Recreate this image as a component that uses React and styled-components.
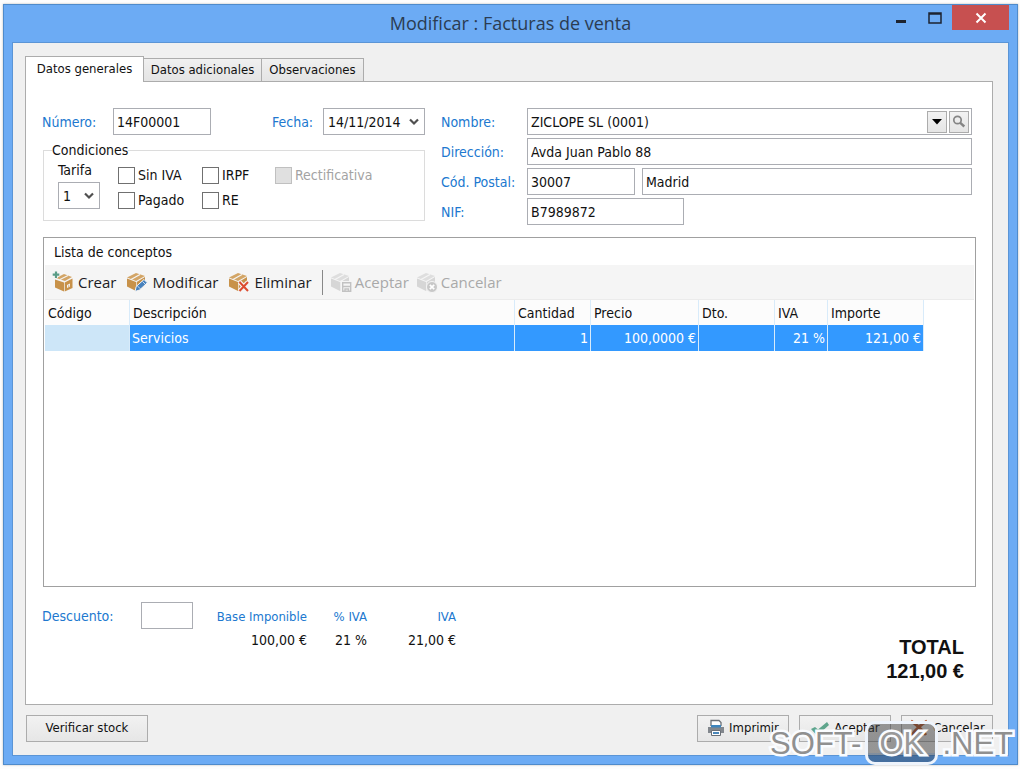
import React from "react";
import styled, { createGlobalStyle, css } from "styled-components";

const ui = '"DejaVu Sans Condensed", "DejaVu Sans", Tahoma, sans-serif';
const segoe = '"Open Sans", "Noto Sans", sans-serif';

const GlobalStyle = createGlobalStyle`
  * { box-sizing: border-box; }
  body { margin: 0; background: #fdfdfd; font: 14px/16px ${ui}; color: #111; }
  button, input, select { font: inherit; color: inherit; margin: 0; border-radius: 0; }
`;

const Page = styled.div`
  min-height: 100vh;
  padding: 4px 2px 4px 3px;
  display: flex;
`;

const Window = styled.main`
  flex: 1;
  min-width: 0;
  position: relative;
  display: flex;
  flex-direction: column;
  padding: 0 8px 8px;
  background: #6cabf4;
  border: 1px solid #4f8bcb;
  box-shadow: 0 0 2px #bbb;
`;

const TitleBar = styled.header`
  height: 37px;
  display: grid;
  grid-template-columns: 1fr auto 1fr;
  align-items: start;
`;

const Title = styled.h1`
  grid-column: 2;
  margin: 0;
  font: 18px/37px ${segoe};
  color: #2b3c52;
`;

const WindowControls = styled.div`
  display: flex;
  justify-content: flex-end;
`;

const ControlButton = styled.button`
  width: ${(p) => (p.$close ? 57 : 34)}px;
  height: 25px;
  padding: 0;
  border: 0;
  display: grid;
  place-items: center;
  background: ${(p) => (p.$close ? "#c75050" : "transparent")};
`;

const Client = styled.div`
  flex: 1;
  display: flex;
  flex-direction: column;
  padding: 13px 15px 13px 12px;
  background: #f0f0f0;
  border: 1px solid #5b95d6;
`;

const Tabs = styled.nav`
  display: flex;
  align-items: flex-end;
`;

const Tab = styled.button`
  height: 23px;
  width: ${(p) => p.$width}px;
  padding: 0;
  font-size: 13px;
  white-space: nowrap;
  border: 1px solid #acacac;
  border-width: 1px 1px 0 0;
  background: linear-gradient(#f0f0f0, #e4e4e4);
  ${(p) =>
    p.$active &&
    css`
      height: 26px;
      border-left-width: 1px;
      background: #fff;
      margin-bottom: -1px;
      padding-bottom: 2px;
      z-index: 1;
    `}
`;

const Panel = styled.section`
  flex: 1;
  display: flex;
  flex-direction: column;
  padding: 26px 16px 21px;
  background: #fff;
  border: 1px solid #acacac;
`;

const Fields = styled.div`
  display: grid;
  grid-template-columns: 383px 1fr;
  gap: 16px;
`;

const Label = styled.label`
  color: #2078cf;
  white-space: nowrap;
`;

const TextBox = styled.input`
  flex: ${(p) => (p.$width ? "none" : "1")};
  width: ${(p) => (p.$width ? p.$width + "px" : "100%")};
  min-width: 0;
  height: 27px;
  padding: 0 3px;
  background: #fff;
  border: 1px solid #abadb3;
`;

const Picker = styled.select`
  appearance: none;
  width: ${(p) => p.$width}px;
  height: 27px;
  padding: 0 4px;
  border: 1px solid #abadb3;
  background: #fff
    url("data:image/svg+xml,%3Csvg xmlns='http://www.w3.org/2000/svg' width='10' height='8'%3E%3Cpath d='M1 1.5l4 4 4-4' fill='none' stroke='%23505050' stroke-width='2.2'/%3E%3C/svg%3E")
    no-repeat right 5px center;
`;

const NumberRow = styled.div`
  display: grid;
  grid-template-columns: 71px 98px 1fr 51px 102px;
  align-items: center;
`;

const DateLabel = styled(Label)`
  grid-column: 4;
`;

const Conditions = styled.fieldset`
  display: flex;
  height: 79px;
  margin: 7px 0 0 1px;
  padding: 4px 14px 0;
  border: 1px solid #dcdcdc;
`;

const Legend = styled.legend`
  margin-left: -6px;
  padding: 0;
`;

const Rate = styled.div`
  display: flex;
  flex-direction: column;
  width: 60px;
  gap: 4px;
`;

const Checks = styled.div`
  display: grid;
  grid-template-columns: 84px 73px auto;
  grid-auto-rows: 16px;
  row-gap: 9px;
  padding-top: 5px;
`;

const Check = styled.label`
  display: flex;
  align-items: center;
  gap: 3px;
  white-space: nowrap;
  color: ${(p) => (p.$off ? "#a3a3a3" : "inherit")};
  input {
    appearance: none;
    width: 17px;
    height: 17px;
    border: 1px solid ${(p) => (p.$off ? "#c0c0c0" : "#707070")};
    background: ${(p) => (p.$off ? "#e0e0e0" : "#fff")};
  }
`;

const Customer = styled.div`
  display: grid;
  grid-template-columns: 86px 1fr;
  row-gap: 3px;
  align-items: center;
  padding-right: 4px;
`;

const Combo = styled.div`
  display: flex;
  align-items: center;
  gap: 2px;
  padding-right: 2px;
  border: 1px solid #abadb3;
  input { flex: 1; height: 25px; border: 0; }
`;

const ComboButton = styled.button`
  width: 20px;
  height: 22px;
  padding: 0;
  display: grid;
  place-items: center;
  border: 1px solid #acacac;
  background: linear-gradient(#f2f2f2, #e5e5e5);
`;

const Locality = styled.div`
  display: flex;
  gap: 7px;
`;

const List = styled.section`
  flex: 1;
  margin: 12px 0 0 1px;
  padding: 0 1px;
  border: 1px solid #a0a0a0;
`;

const ListTitle = styled.h2`
  margin: 0;
  padding: 6px 9px 5px;
  font: inherit;
`;

const Toolbar = styled.div`
  display: flex;
  align-items: center;
  height: 35px;
  padding-left: 7px;
  background: #f5f5f5;
  border-bottom: 1px solid #ebebeb;
`;

const Tool = styled.button`
  display: flex;
  align-items: center;
  gap: 4px;
  margin-right: 10px;
  padding: 0;
  border: 0;
  background: none;
  font: 15px/20px ${segoe};
  color: ${(p) => (p.disabled ? "#a9a9a9" : "#1c1c24")};
  &:disabled { gap: 3px; margin-right: 7px; }
`;

const Divider = styled.span`
  width: 1px;
  height: 25px;
  margin-right: 7px;
  background: #888;
`;

const Grid = styled.table`
  width: 879px;
  table-layout: fixed;
  border-collapse: separate;
  border-spacing: 0;
  th, td { height: 26px; padding: 0 3px; white-space: nowrap; border-right: 1px solid #d8ebfa; }
  th { height: 25px; font-weight: normal; text-align: left; background: #fcfcfc; }
  td { color: #fff; background: #3399ff; text-align: right; padding: 0 2px; }
  td:first-child { background: #cde6f8; }
  td:nth-child(2) { text-align: left; }
`;

const Summary = styled.div`
  display: flex;
  align-items: flex-start;
  padding-top: 15px;
`;

const Discount = styled.div`
  display: flex;
  align-items: center;
  height: 27px;
  label { width: 99px; }
`;

const Taxes = styled.table`
  margin-left: 22px;
  margin-top: 3px;
  border-spacing: 0;
  table-layout: fixed;
  width: 241px;
  th, td { height: 23px; padding: 0; text-align: right; font-weight: normal; white-space: nowrap; }
  th { color: #2078cf; font-size: 13px; }
`;

const Total = styled.p`
  margin: 33px 12px 0 auto;
  font: bold 20px/24px "Liberation Sans", Arial, sans-serif;
  text-align: right;
`;

const Footer = styled.footer`
  display: flex;
  gap: 10px;
  padding: 10px 0 0 1px;
`;

const Button = styled.button`
  width: ${(p) => p.$width || 92}px;
  height: 27px;
  display: flex;
  align-items: center;
  justify-content: center;
  gap: 4px;
  padding: 0 0 2px;
  font-size: 13px;
  white-space: nowrap;
  border: 1px solid #acacac;
  background: linear-gradient(#f2f2f2, #e6e6e6);
  &:first-child { margin-right: auto; }
`;

const Watermark = styled.div`
  position: absolute;
  right: 4px;
  bottom: -1px;
  display: flex;
  align-items: center;
  gap: 4px;
  font: 31px/43px "Liberation Sans", Arial, sans-serif;
  color: #909090;
  -webkit-text-stroke: 5px #fafcff;
  paint-order: stroke fill;
  pointer-events: none;
`;

const Badge = styled.span`
  width: 73px;
  height: 44px;
  line-height: 40px;
  text-align: center;
  color: #999;
  border: 3px solid #eef4fc;
  border-radius: 10px;
  background: linear-gradient(rgba(60, 60, 60, 0.5) 76%, rgba(38, 62, 90, 0.55) 76%);
`;

function BoxIcon({ kind, muted }) {
  const body = muted ? "#d6d6d6" : "#c8924a";
  const top = muted ? "#dedede" : "#d3a566";
  const gap = "#f5f5f5";
  return (
    <svg width="22" height="22" viewBox="0 0 22 22" aria-hidden="true">
      {kind === "add" ? (
        <>
          <path d="M4 7l8-4 8 3-7 4z" fill={top} />
          <path d="M3 8.500l9 3v9l-9-4z" fill={body} />
          <path d="M12.700 11.500l7.800-4v9.500l-7.800 3.500z" fill={body} />
          <path d="M8 8.500l8-4" stroke={gap} strokeWidth="1.200" />
          <path d="M15 14l3-1.400v3l-3 1.300z" fill={gap} />
          <path d="M16 14.700l1.200-.5v1l-1.200.5z" fill={body} />
          <path d="M4 0v7M.5 3.500h7" stroke={gap} strokeWidth="4" />
          <path d="M4 .5v6.500M.7 3.700h6.600" stroke="#5a9c86" strokeWidth="2.200" />
        </>
      ) : (
        <>
          <path d="M1 6.500l9-4.500 9 3-9 5z" fill={top} />
          <path d="M1 7.500l9 3.500v9L1 15.500z" fill={body} />
          <path d="M10.700 11l8.300-5v8.500l-8.300 5.500z" fill={body} />
          <path d="M5 8.500l9-5" stroke={gap} strokeWidth="1.300" />
        </>
      )}
      {kind === "edit" && (
        <>
          <path d="M9 20.500l1.200-5 7.800-7 3.300 3.300-7.800 7.200z" fill="#4781bd" stroke={gap} />
          <path d="M11.500 15l2.800 2.800M16.500 10.500l2.800 2.800" stroke="#e9f2fb" strokeWidth=".8" />
        </>
      )}
      {kind === "remove" && (
        <>
          <path d="M11.500 11l8.500 9M20 11l-8.500 9" stroke={gap} strokeWidth="4.500" />
          <path d="M11.500 11l8.500 9M20 11l-8.500 9" stroke="#dc4c30" strokeWidth="2" />
        </>
      )}
      {kind === "save" && (
        <>
          <path d="M11 10h11v12H11z" fill={gap} />
          <path d="M12.700 11.700h8v8.600h-8zM12.700 15.500h8M15 20v-2h3.500v2" fill="none" stroke="#c2c2c2" strokeWidth="1.400" />
        </>
      )}
      {kind === "cancel" && (
        <>
          <circle cx="16" cy="16" r="5.500" fill="#c8c8c8" stroke={gap} />
          <path d="M13.800 13.800l4.400 4.400M18.200 13.800l-4.400 4.400" stroke="#fff" strokeWidth="1.700" />
        </>
      )}
    </svg>
  );
}

const PrinterIcon = () => (
  <svg width="18" height="18" viewBox="0 0 18 18" aria-hidden="true">
    <path d="M4 7V1.500h8l2 2V7" fill="#fff" stroke="#6b7077" strokeWidth="1.300" />
    <path d="M1 8h16v6H1z" fill="#82878d" />
    <path d="M4 6h10v2.500H4z" fill="#3e85bd" />
    <path d="M4.500 11.500h9v5h-9z" fill="#fff" stroke="#6b7077" />
    <path d="M6 13h6v2H6z" fill="#4a87ba" />
  </svg>
);

const CheckIcon = () => (
  <svg width="20" height="18" viewBox="0 0 20 18" aria-hidden="true">
    <path d="M1 10l4-2 3 2.500L17 3l2 3L8.500 15.500H6z" fill="#5fa58c" />
  </svg>
);

const CrossIcon = () => (
  <svg width="20" height="18" viewBox="0 0 20 18" aria-hidden="true">
    <path d="M2 2q9 6 15 14M18 2Q8 8 3 16" fill="none" stroke="#b45328" strokeWidth="2.800" />
  </svg>
);

const columns = [
  ["Código", 85, ""],
  ["Descripción", 385, "Servicios"],
  ["Cantidad", 76, "1"],
  ["Precio", 108, "100,0000 €"],
  ["Dto.", 76, ""],
  ["IVA", 53, "21 %"],
  ["Importe", 96, "121,00 €"],
];

export default function App() {
  return (
    <Page>
      <GlobalStyle />
      <Window>
        <TitleBar>
          <Title>Modificar : Facturas de venta</Title>
          <WindowControls>
            <ControlButton aria-label="Minimizar">
              <svg width="12" height="14"><path d="M1 9h10v3H1z" fill="#1d2430" /></svg>
            </ControlButton>
            <ControlButton aria-label="Maximizar">
              <svg width="14" height="12"><path d="M1 1h12v10H1zM1 2h12" fill="none" stroke="#1d2430" strokeWidth="1.500" /></svg>
            </ControlButton>
            <ControlButton $close aria-label="Cerrar">
              <svg width="12" height="12"><path d="M1.500 1.500l9 9M10.500 1.500l-9 9" stroke="#fff" strokeWidth="2" /></svg>
            </ControlButton>
          </WindowControls>
        </TitleBar>

        <Client>
          <Tabs>
            <Tab $active $width={119}>Datos generales</Tab>
            <Tab $width={118}>Datos adicionales</Tab>
            <Tab $width={102}>Observaciones</Tab>
          </Tabs>

          <Panel>
            <Fields>
              <div>
                <NumberRow>
                  <Label htmlFor="numero">Número:</Label>
                  <TextBox id="numero" $width={98} defaultValue="14F00001" />
                  <DateLabel htmlFor="fecha">Fecha:</DateLabel>
                  <Picker id="fecha" $width={102}><option>14/11/2014</option></Picker>
                </NumberRow>
                <Conditions>
                  <Legend>Condiciones</Legend>
                  <Rate>
                    <label htmlFor="tarifa">Tarifa</label>
                    <Picker id="tarifa" $width={42}><option>1</option></Picker>
                  </Rate>
                  <Checks>
                    <Check><input type="checkbox" />Sin IVA</Check>
                    <Check><input type="checkbox" />IRPF</Check>
                    <Check $off><input type="checkbox" disabled />Rectificativa</Check>
                    <Check><input type="checkbox" />Pagado</Check>
                    <Check><input type="checkbox" />RE</Check>
                  </Checks>
                </Conditions>
              </div>

              <Customer>
                <Label htmlFor="nombre">Nombre:</Label>
                <Combo>
                  <TextBox id="nombre" defaultValue="ZICLOPE SL (0001)" />
                  <ComboButton aria-label="Desplegar">
                    <svg width="10" height="6"><path d="M0 0h10L5 5.500z" fill="#000" /></svg>
                  </ComboButton>
                  <ComboButton aria-label="Buscar">
                    <svg width="14" height="14" fill="none" stroke="#858585">
                      <circle cx="5.500" cy="5" r="3.700" strokeWidth="1.700" />
                      <path d="M8.300 7.800l4 3.700" strokeWidth="2.400" />
                    </svg>
                  </ComboButton>
                </Combo>
                <Label htmlFor="direccion">Dirección:</Label>
                <TextBox id="direccion" defaultValue="Avda Juan Pablo 88" />
                <Label htmlFor="postal">Cód. Postal:</Label>
                <Locality>
                  <TextBox id="postal" $width={108} defaultValue="30007" />
                  <TextBox aria-label="Localidad" defaultValue="Madrid" />
                </Locality>
                <Label htmlFor="nif">NIF:</Label>
                <TextBox id="nif" $width={157} defaultValue="B7989872" />
              </Customer>
            </Fields>

            <List>
              <ListTitle>Lista de conceptos</ListTitle>
              <Toolbar>
                <Tool><BoxIcon kind="add" />Crear</Tool>
                <Tool><BoxIcon kind="edit" />Modificar</Tool>
                <Tool><BoxIcon kind="remove" />Eliminar</Tool>
                <Divider />
                <Tool disabled><BoxIcon kind="save" muted />Aceptar</Tool>
                <Tool disabled><BoxIcon kind="cancel" muted />Cancelar</Tool>
              </Toolbar>
              <Grid>
                <colgroup>
                  {columns.map(([name, width]) => <col key={name} width={width} />)}
                </colgroup>
                <thead>
                  <tr>{columns.map(([name]) => <th key={name}>{name}</th>)}</tr>
                </thead>
                <tbody>
                  <tr>{columns.map(([name, , value]) => <td key={name}>{value}</td>)}</tr>
                </tbody>
              </Grid>
            </List>

            <Summary>
              <Discount>
                <Label htmlFor="descuento">Descuento:</Label>
                <TextBox id="descuento" $width={52} />
              </Discount>
              <Taxes>
                <colgroup><col width="92" /><col width="60" /><col width="89" /></colgroup>
                <thead><tr><th>Base Imponible</th><th>% IVA</th><th>IVA</th></tr></thead>
                <tbody><tr><td>100,00 €</td><td>21 %</td><td>21,00 €</td></tr></tbody>
              </Taxes>
              <Total>TOTAL<br />121,00 €</Total>
            </Summary>
          </Panel>

          <Footer>
            <Button $width={122}>Verificar stock</Button>
            <Button><PrinterIcon />Imprimir</Button>
            <Button><CheckIcon />Aceptar</Button>
            <Button><CrossIcon />Cancelar</Button>
          </Footer>
        </Client>

        <Watermark>
          <span>SOFT-</span>
          <Badge>OK</Badge>
          <span>.NET</span>
        </Watermark>
      </Window>
    </Page>
  );
}
